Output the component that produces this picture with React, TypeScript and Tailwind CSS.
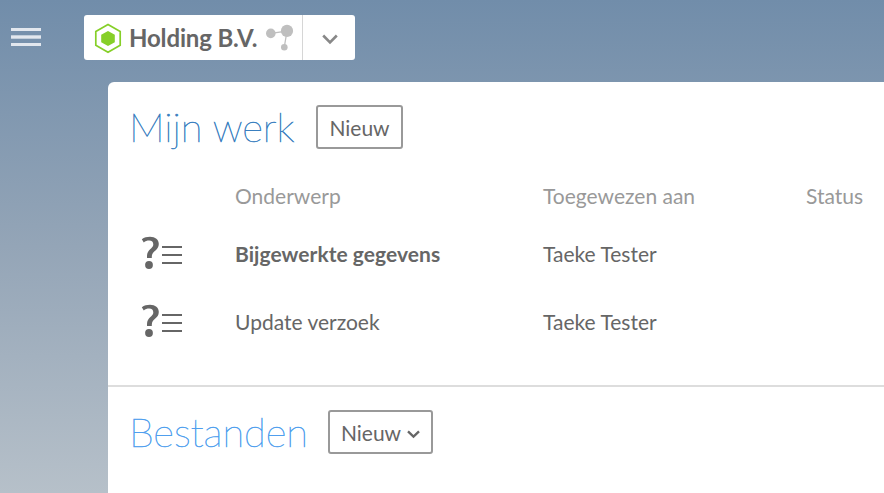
import React from "react";

const rows = [
  { subject: "Bijgewerkte gegevens", assignee: "Taeke Tester", unread: true },
  { subject: "Update verzoek", assignee: "Taeke Tester", unread: false },
];

function MenuIcon() {
  return (
    <svg width="30" height="18" viewBox="0 0 30 18" fill="#e2e7ee">
      <rect width="30" height="3" />
      <rect y="7.3" width="30" height="3.4" />
      <rect y="15" width="30" height="3" />
    </svg>
  );
}

function HexagonLogo() {
  return (
    <svg width="28" height="32" viewBox="0 0 28 32">
      <path d="M14 2.5 26.2 9.4V23.2L14 30.2 1.8 23.2V9.4Z" fill="none" stroke="#86cf28" strokeWidth="1.7" />
      <path d="M14 9 20.8 12.7V20.2L14 23.9 7.2 20.2V12.7Z" fill="#86cf28" />
    </svg>
  );
}

function NetworkIcon() {
  return (
    <svg width="28" height="28" viewBox="0 0 28 28" fill="#bfbfbf">
      <path d="M5 9.4 21 7 18.3 23" fill="none" stroke="#bfbfbf" strokeWidth="1.3" />
      <circle cx="4.8" cy="9.4" r="4.8" />
      <circle cx="21" cy="6.9" r="6.1" />
      <circle cx="18.3" cy="23.2" r="3.3" />
    </svg>
  );
}

function QuestionListIcon() {
  return (
    <svg className="shrink-0" width="42" height="34" viewBox="0 0 42 34">
      <path d="M.8 3.2C3.2 1.4 6 .7 9 .7c5.3 0 8.8 2.9 8.8 7.4 0 6.6-7 6.8-7 12.6v1.2H6v-1.9c0-6.8 6.3-7.4 6.3-11.5 0-2.6-1.4-3.9-4.1-3.9-2.2 0-3.8.4-5.4 1.8Z" fill="#666" />
      <circle cx="8" cy="29" r="3.9" fill="#666" />
      <path d="M21 11h20M21 19h20M21 27h20" stroke="#666" strokeWidth="2" />
    </svg>
  );
}

function Heading({ children, className }: { children: React.ReactNode; className: string }) {
  return <h2 className={`-mt-0.5 text-[40px] leading-[48px] font-extralight tracking-[-0.1px] whitespace-nowrap [-webkit-text-stroke:0.6px_currentColor] ${className}`}>{children}</h2>;
}

function NewButton({ children, className }: { children?: React.ReactNode; className: string }) {
  return (
    <button className={`flex h-11 items-center justify-center rounded-[3px] border-2 border-[#999] pt-px text-[21px] text-[#666] ${className}`}>
      Nieuw
      {children}
    </button>
  );
}

export default function App() {
  return (
    <div className="flex h-[493px] w-[884px] flex-col overflow-hidden bg-linear-to-b from-[#718daa] via-[#94a5b7] to-[#b6c0c9] font-['Lato',sans-serif] text-[21px] text-[#666]">
      <header className="flex h-[82px] shrink-0 items-start">
        <button className="mt-7 ml-[11px] w-[73px]" aria-label="Menu">
          <MenuIcon />
        </button>
        <div className="mt-[15px] flex h-[45px] w-[271px] rounded-[3px] bg-white">
          <div className="flex w-[218px] items-center pl-[10px]">
            <HexagonLogo />
            <span className="ml-[7px] w-[137px] pt-px text-[24px] font-bold tracking-[-0.15px] whitespace-nowrap">Holding B.V.</span>
            <NetworkIcon />
          </div>
          <button className="flex flex-1 items-center justify-center border-l border-[#d6d6d6]" aria-label="Open">
            <svg className="mt-1 ml-px" width="16" height="11" viewBox="0 0 16 11" fill="none" stroke="#888" strokeWidth="2.6">
              <path d="m1.2 1.5 6.8 6.8 6.8-6.8" />
            </svg>
          </button>
        </div>
      </header>
      <main className="ml-[108px] flex flex-1 flex-col rounded-tl-[6px] bg-white">
        <section className="h-[305px] border-b-2 border-[#ddd]">
          <div className="flex items-start pt-[23px] pl-[21px]">
            <Heading className="w-[187px] text-[#3a7fbf]">Mijn werk</Heading>
            <NewButton className="w-[87px]" />
          </div>
          <div className="mt-[23px] grid h-[45px] grid-cols-[127px_308px_263px_78px] leading-[44px] text-[#999]">
            <span className="col-start-2">Onderwerp</span>
            <span>Toegewezen aan</span>
            <span>Status</span>
          </div>
          {rows.map((row) => (
            <div key={row.subject} className="grid h-[68px] grid-cols-[127px_308px_263px_78px] items-center">
              <span className="pl-[33px]"><QuestionListIcon /></span>
              <span className={row.unread ? "pt-0.5 font-bold tracking-[0.05px]" : "pt-0.5"}>{row.subject}</span>
              <span className="pt-0.5">{row.assignee}</span>
            </div>
          ))}
        </section>
        <section className="flex items-start pt-[23px] pl-[21px]">
          <Heading className="w-[199px] text-[#509fee]">Bestanden</Heading>
          <NewButton className="w-[105px]">
            <svg className="mt-1 ml-[6px]" width="13" height="9" viewBox="0 0 13 9" fill="none" stroke="#666" strokeWidth="2.3">
              <path d="m1 1.3 5.5 5.3L12 1.3" />
            </svg>
          </NewButton>
        </section>
      </main>
    </div>
  );
}
